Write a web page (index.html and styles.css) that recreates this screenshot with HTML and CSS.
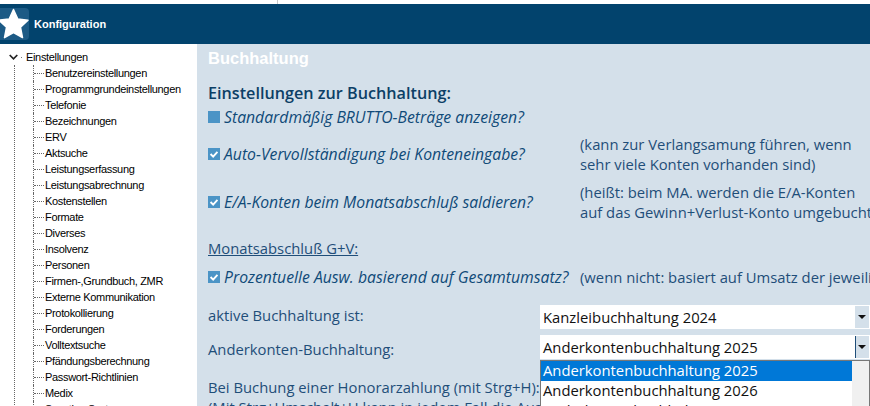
FILE: index.html
```html
<!DOCTYPE html>
<html>
<head>
<meta name="viewport" content="width=device-width, initial-scale=1">
<link rel="stylesheet" href="styles.css">
</head>
<body>
  <div class="topstrip"><span class="tick"></span></div>

  <div class="header">
    <div class="logo">
      <svg width="29" height="32" viewBox="0 0 29 32">
        <path d="M13.5 1.5 L17.8 11 L28 12.2 L20.5 19.3 L22.5 29.6 L13.5 24.5 L4.5 29.6 L6.5 19.3 L-1 12.2 L9.2 11 Z" fill="#fff" stroke="#fff" stroke-width="1.5" stroke-linejoin="round"/>
      </svg>
    </div>
    <span class="header-title">Konfiguration</span>
  </div>

  <div class="main">
    <div class="tree">
      <div class="tree-root">
        <svg class="chevron" width="9" height="6" viewBox="0 0 9 6"><path d="M0.7 1 L4.5 4.8 L8.3 1" fill="none" stroke="#222" stroke-width="1.7"/></svg>
        <span class="root-dot"></span>
        <span>Einstellungen</span>
      </div>
      <ul class="tree-list">
        <li>Benutzereinstellungen</li>
        <li>Programmgrundeinstellungen</li>
        <li>Telefonie</li>
        <li>Bezeichnungen</li>
        <li>ERV</li>
        <li>Aktsuche</li>
        <li>Leistungserfassung</li>
        <li>Leistungsabrechnung</li>
        <li>Kostenstellen</li>
        <li>Formate</li>
        <li>Diverses</li>
        <li>Insolvenz</li>
        <li>Personen</li>
        <li>Firmen-,Grundbuch, ZMR</li>
        <li>Externe Kommunikation</li>
        <li>Protokollierung</li>
        <li>Forderungen</li>
        <li>Volltextsuche</li>
        <li>Pfändungsberechnung</li>
        <li>Passwort-Richtlinien</li>
        <li>Medix</li>
        <li>Sonstige Systeme</li>
      </ul>
    </div>

    <div class="content">
      <div class="page-title">Buchhaltung</div>
      <h3 class="section-title">Einstellungen zur Buchhaltung:</h3>

      <div class="opt opt-first">
        <span class="box"></span>
        <span>Standardmäßig BRUTTO-Beträge anzeigen?</span>
      </div>

      <div class="opt-row opt-row-auto">
        <div class="opt">
          <span class="box"><svg width="14" height="14" viewBox="0 0 14 14"><path d="M3 7 L6 10 L11 4.5" fill="none" stroke="#fff" stroke-width="2.2"/></svg></span>
          <span>Auto-Vervollständigung bei Konteneingabe?</span>
        </div>
        <div class="note">(kann zur Verlangsamung führen, wenn<br>sehr viele Konten vorhanden sind)</div>
      </div>

      <div class="opt-row opt-row-saldo">
        <div class="opt">
          <span class="box"><svg width="14" height="14" viewBox="0 0 14 14"><path d="M3 7 L6 10 L11 4.5" fill="none" stroke="#fff" stroke-width="2.2"/></svg></span>
          <span>E/A-Konten beim Monatsabschluß saldieren?</span>
        </div>
        <div class="note">(heißt: beim MA. werden die E/A-Konten<br>auf das Gewinn+Verlust-Konto umgebucht)</div>
      </div>

      <div class="sub-title">Monatsabschluß G+V:</div>

      <div class="opt-row opt-row-pct">
        <div class="opt">
          <span class="box"><svg width="14" height="14" viewBox="0 0 14 14"><path d="M3 7 L6 10 L11 4.5" fill="none" stroke="#fff" stroke-width="2.2"/></svg></span>
          <span>Prozentuelle Ausw. basierend auf Gesamtumsatz?</span>
        </div>
        <div class="note">(wenn nicht: basiert auf Umsatz der jeweiligen Buchhaltung)</div>
      </div>

      <div class="field field-first">
        <label>aktive Buchhaltung ist:</label>
        <div class="combo">
          <span class="combo-text">Kanzleibuchhaltung 2024</span>
          <span class="combo-btn"></span>
        </div>
      </div>

      <div class="field field-second">
        <label>Anderkonten-Buchhaltung:</label>
        <div class="combo combo-open">
          <span class="combo-text">Anderkontenbuchhaltung 2025</span>
          <span class="combo-btn"></span>
          <div class="dropdown">
            <div class="dropdown-items">
              <div class="dropdown-item selected">Anderkontenbuchhaltung 2025</div>
              <div class="dropdown-item">Anderkontenbuchhaltung 2026</div>
              <div class="dropdown-item">Anderkontenbuchhaltung 2027</div>
            </div>
            <div class="dropdown-scroll"></div>
          </div>
        </div>
      </div>

      <div class="para">Bei Buchung einer Honorarzahlung (mit Strg+H):<br>(Mit Strg+Umschalt+H kann in jedem Fall die Auswahl erfolgen)</div>
    </div>
  </div>
</body>
</html>
```

FILE: styles.css
```css
* {
  box-sizing: border-box;
}

html, body {
  height: 100%;
}

body {
  margin: 0;
  background: #fff;
  overflow: hidden;
  font-family: "Open Sans", sans-serif;
  color: #1f4e79;
}

/* thin strip above the title bar */
.topstrip {
  height: 4px;
  padding-left: 277px;
}

.tick {
  display: block;
  width: 1px;
  height: 4px;
  background: #c8c8c8;
}

/* Title bar */
.header {
  height: 40px;
  background: #02436d;
  display: flex;
  align-items: center;
}

.logo {
  width: 29px;
  height: 32px;
  background: #1c5a85;
  border-radius: 0 4px 4px 0;
}

.logo svg {
  display: block;
}

.header-title {
  margin-left: 5px;
  font-family: "Liberation Sans", sans-serif;
  font-size: 11px;
  font-weight: bold;
  color: #fff;
}

.main {
  display: flex;
  height: 362px;
}

/* Tree on the left */
.tree {
  width: 197px;
  flex: none;
  padding-top: 5px;
  font-family: "Liberation Sans", sans-serif;
  font-size: 11px;
  letter-spacing: -0.33px;
  color: #000;
  overflow: hidden;
}

.tree-root {
  height: 16px;
  display: flex;
  align-items: center;
  padding-left: 9px;
}

.root-dot {
  width: 1px;
  height: 1px;
  margin: 0 4px 0 3px;
  background: #777;
}

.tree-list {
  margin: 0 0 0 14px;
  padding: 0 0 0 19px;
  list-style: none;
  border-left: 1px dotted #666;
}

.tree-list li {
  position: relative;
  height: 16px;
  line-height: 16px;
  padding-left: 11px;
  border-left: 1px dotted #666;
  margin-left: -1px;
  white-space: nowrap;
}

.tree-list li::before {
  content: "";
  position: absolute;
  left: 0;
  top: 8px;
  width: 10px;
  border-top: 1px dotted #666;
}

/* Settings panel */
.content {
  flex: 1;
  min-width: 0;
  background: #d4e0ea;
  padding-left: 11px;
  font-size: 14.8px;
  white-space: nowrap;
}

.page-title {
  height: 28px;
  line-height: 28px;
  font-family: "Liberation Sans", sans-serif;
  font-size: 16.5px;
  font-weight: bold;
  color: #fff;
}

.section-title {
  margin: 11px 0 0;
  height: 20px;
  line-height: 20px;
  font-size: 16.2px;
  font-weight: 600;
  color: #0c3f66;
}

.opt {
  display: flex;
  align-items: center;
  height: 20px;
  font-size: 15.75px;
  font-style: italic;
  color: #0f4a78;
}

.opt-first {
  margin-top: 4px;
}

.box {
  flex: none;
  width: 12px;
  height: 12px;
  margin-right: 4px;
  background: #4b94c6;
  display: flex;
  align-items: center;
  justify-content: center;
}

.box svg {
  width: 12px;
  height: 12px;
}

.opt-row {
  display: grid;
  grid-template-columns: 372px 1fr;
  align-items: center;
}

.opt-row-auto {
  margin-top: 7px;
}

.opt-row-saldo {
  margin-top: 8px;
}

.opt-row-pct {
  margin-top: 9px;
}

.note {
  line-height: 20px;
  color: #1f4e79;
}

.sub-title {
  margin-top: 16px;
  height: 20px;
  line-height: 20px;
  text-decoration: underline;
  color: #1f4e79;
}

.field {
  display: grid;
  grid-template-columns: 332px 330px;
  align-items: center;
  height: 24px;
}

.field-first {
  margin-top: 18px;
}

.field-first label {
  padding-bottom: 4px;
}

.field-second {
  margin-top: 6px;
}

.field-second label {
  padding-top: 4px;
}

/* Combo boxes */
.combo {
  position: relative;
  height: 24px;
  background: #fff;
  color: #111;
  display: flex;
  align-items: center;
  padding-left: 3px;
}

.combo-text {
  flex: 1;
}

.combo-btn {
  position: relative;
  width: 14px;
  height: 22px;
  margin-right: 1px;
  background: #d4e0ea;
}

.combo-btn::after {
  content: "";
  position: absolute;
  left: 3px;
  top: 9px;
  border-top: 4px solid #111;
  border-left: 4px solid transparent;
  border-right: 4px solid transparent;
}

.combo-open .combo-btn {
  border-left: 1px solid #1f4e79;
}

.combo-open .combo-btn::after {
  left: 2px;
}

/* Open list of the second combo */
.dropdown {
  position: absolute;
  left: 0;
  top: 25px;
  width: 330px;
  height: 60px;
  display: flex;
  background: #fff;
  border: 1px solid #777;
  border-bottom: none;
  overflow: hidden;
}

.dropdown-items {
  flex: 1;
}

.dropdown-item {
  height: 20px;
  line-height: 19px;
  padding-left: 2px;
}

.dropdown-item.selected {
  background: #0078d7;
  color: #fff;
}

.dropdown-scroll {
  width: 17px;
  background: #f0f0f0;
}

.para {
  margin-top: 18px;
  line-height: 20px;
  color: #1f4e79;
}
```
